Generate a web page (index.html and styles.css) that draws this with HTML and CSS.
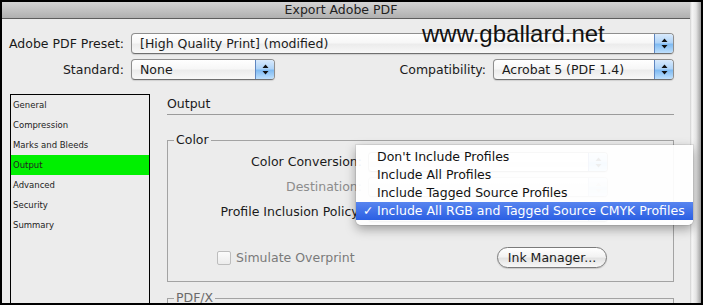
FILE: index.html
```html
<!DOCTYPE html>
<html lang="en">
<head>
<meta charset="utf-8">
<title>Export Adobe PDF</title>
<link rel="stylesheet" href="styles.css">
</head>
<body>
<div class="frame">
  <div class="window">
    <div class="dialog">
      <div class="titlebar">Export Adobe PDF</div>
      <div class="content">
        <div class="presets">
          <div class="label">Adobe PDF Preset:</div>
          <div class="popup">
            <span class="popup-text">[High Quality Print] (modified)</span>
            <span class="cap"><svg width="7" height="11" viewBox="0 0 7 11"><path d="M3.5 0.5 L6.5 4 L0.5 4 Z M0.5 7 L6.5 7 L3.5 10.5 Z" fill="#111"/></svg></span>
          </div>
          <div class="label">Standard:</div>
          <div class="row2">
            <div class="popup popup-std">
              <span class="popup-text">None</span>
              <span class="cap"><svg width="7" height="11" viewBox="0 0 7 11"><path d="M3.5 0.5 L6.5 4 L0.5 4 Z M0.5 7 L6.5 7 L3.5 10.5 Z" fill="#111"/></svg></span>
            </div>
            <div class="compat">
              <span class="label">Compatibility:</span>
              <div class="popup popup-compat">
                <span class="popup-text">Acrobat 5 (PDF 1.4)</span>
                <span class="cap"><svg width="7" height="11" viewBox="0 0 7 11"><path d="M3.5 0.5 L6.5 4 L0.5 4 Z M0.5 7 L6.5 7 L3.5 10.5 Z" fill="#111"/></svg></span>
              </div>
            </div>
          </div>
        </div>
        <div class="main">
          <ul class="sections">
            <li>General</li>
            <li>Compression</li>
            <li>Marks and Bleeds</li>
            <li class="active">Output</li>
            <li>Advanced</li>
            <li>Security</li>
            <li>Summary</li>
          </ul>
          <div class="panel">
            <div class="panel-title">Output</div>
            <fieldset class="group group-color">
              <legend>Color</legend>
              <div class="form">
                <div class="flabel">Color Conversion:</div>
                <div class="popup popup-small">
                  <span class="popup-text"></span>
                  <span class="cap"><svg width="7" height="11" viewBox="0 0 7 11"><path d="M3.5 0.5 L6.5 4 L0.5 4 Z M0.5 7 L6.5 7 L3.5 10.5 Z" fill="#111"/></svg></span>
                </div>
                <div class="flabel disabled">Destination:</div>
                <div class="popup popup-small popup-disabled">
                  <span class="popup-text"></span>
                  <span class="cap"><svg width="7" height="11" viewBox="0 0 7 11"><path d="M3.5 0.5 L6.5 4 L0.5 4 Z M0.5 7 L6.5 7 L3.5 10.5 Z" fill="#999"/></svg></span>
                </div>
                <div class="flabel">Profile Inclusion Policy:</div>
                <div class="popup popup-small">
                  <span class="popup-text"></span>
                  <span class="cap"><svg width="7" height="11" viewBox="0 0 7 11"><path d="M3.5 0.5 L6.5 4 L0.5 4 Z M0.5 7 L6.5 7 L3.5 10.5 Z" fill="#111"/></svg></span>
                </div>
              </div>
              <div class="options">
                <label class="check-label"><span class="checkbox"></span>Simulate Overprint</label>
                <button class="button" type="button">Ink Manager...</button>
              </div>
            </fieldset>
            <fieldset class="group group-pdfx">
              <legend>PDF/X</legend>
              <div class="pdfx-body"></div>
            </fieldset>
          </div>
        </div>
      </div>
    </div>
    <div class="edge"></div>
  </div>
  <div class="watermark">www.gballard.net</div>
  <ul class="menu">
    <li>Don't Include Profiles</li>
    <li>Include All Profiles</li>
    <li>Include Tagged Source Profiles</li>
    <li class="selected"><span class="check">✓</span>Include All RGB and Tagged Source CMYK Profiles</li>
  </ul>
</div>
</body>
</html>
```
FILE: styles.css
```css
html, body {
  margin: 0;
  padding: 0;
  background: #000;
}

.frame {
  position: relative;
  width: 703px;
  height: 305px;
  box-sizing: border-box;
  border: 2px solid #000;
  overflow: hidden;
  font-family: "DejaVu Sans", Verdana, sans-serif;
  font-size: 12.5px;
  color: #1a1a1a;
}

.window {
  display: flex;
  height: 100%;
}

.dialog {
  flex: 1;
  display: flex;
  flex-direction: column;
  background: #ececec;
  min-width: 0;
}

.edge {
  width: 11px;
  background: linear-gradient(to right, #cfcfcf 0, #f6f6f6 2px, #e4e4e4 55%, #9e9e9e 100%);
}

.titlebar {
  height: 16px;
  line-height: 16px;
  text-align: center;
  padding-right: 10px;
  background: linear-gradient(#d4d4d4, #b0b0b0);
  border-bottom: 1px solid #5e5e5e;
  color: #222;
}

.content {
  flex: 1;
  min-height: 0;
  display: flex;
  flex-direction: column;
  padding: 14px 16px 0 0;
}

.presets {
  display: grid;
  grid-template-columns: 122px 1fr;
  grid-auto-rows: 21px;
  column-gap: 7px;
  row-gap: 5px;
}

.label {
  text-align: right;
  line-height: 21px;
  white-space: nowrap;
}

.row2 {
  display: flex;
  justify-content: space-between;
}

.compat {
  display: flex;
  gap: 7px;
}

.popup {
  display: flex;
  height: 21px;
  box-sizing: border-box;
  border: 1px solid #8e8e8e;
  border-bottom-color: #6f6f6f;
  border-radius: 4px;
  background: linear-gradient(#ffffff, #f7f7f7 45%, #ececec 55%, #f8f8f8);
  box-shadow: 0 1px 1px rgba(0, 0, 0, 0.12);
  overflow: hidden;
}

.popup-text {
  flex: 1;
  padding-left: 8px;
  line-height: 19px;
  white-space: nowrap;
  overflow: hidden;
}

.cap {
  width: 18px;
  display: flex;
  align-items: center;
  justify-content: center;
  border-left: 1px solid #5f86c0;
  background: linear-gradient(#d9eafc, #b0d4f8 45%, #80bbf2 55%, #bfe0fd);
}

.popup-std {
  width: 144px;
}

.popup-compat {
  width: 181px;
}

.main {
  flex: 1;
  display: flex;
  gap: 17px;
  margin-top: 14px;
  padding-left: 8px;
  min-height: 0;
}

.sections {
  list-style: none;
  margin: 0;
  padding: 0;
  width: 140px;
  height: 230px;
  flex: none;
  box-sizing: border-box;
  border: 1px solid #000;
  font-size: 8.5px;
  color: #222;
}

.sections li {
  height: 20px;
  line-height: 20px;
  padding-left: 2px;
}

.sections li.active {
  background: #00f000;
}

.panel {
  flex: 1;
  display: flex;
  flex-direction: column;
  min-width: 0;
}

.panel-title {
  height: 20px;
  line-height: 20px;
  border-bottom: 1px solid #9b9b9b;
}

.group {
  margin: 0;
  padding: 5px 0 13px 0;
  border: 1px solid #a3a3a3;
  min-width: 0;
}

.group legend {
  margin-left: 6px;
  padding: 0 2px;
  line-height: 14px;
}

.group-color {
  margin-top: 18px;
}

.group-pdfx {
  margin-top: 9px;
}

.group-pdfx legend {
  color: #6a6a6a;
}

.pdfx-body {
  height: 40px;
}

.form {
  display: grid;
  grid-template-columns: 194px 240px;
  grid-auto-rows: 20px;
  column-gap: 6px;
  row-gap: 5px;
}

.flabel {
  text-align: right;
  line-height: 20px;
  white-space: nowrap;
}

.flabel.disabled {
  color: #8c8c8c;
}

.popup-small {
  height: 20px;
}

.popup-small .popup-text {
  line-height: 18px;
}

.popup-disabled {
  opacity: 0.5;
}

.options {
  display: flex;
  align-items: center;
  height: 21px;
  margin-top: 25px;
  padding-left: 49px;
  padding-right: 66px;
}

.check-label {
  flex: 1;
  display: flex;
  align-items: center;
  gap: 5px;
  color: #7a7a7a;
}

.checkbox {
  width: 14px;
  height: 14px;
  box-sizing: border-box;
  border: 1px solid #bdbdbd;
  border-radius: 2px;
  background: linear-gradient(#fbfbfb, #ececec);
}

.button {
  width: 110px;
  height: 21px;
  padding: 0;
  box-sizing: border-box;
  border: 1px solid #7b7b7b;
  border-radius: 11px;
  background: linear-gradient(#ffffff, #f3f3f3 45%, #e3e3e3 55%, #f8f8f8);
  box-shadow: 0 1px 1px rgba(0, 0, 0, 0.15);
  font-family: "DejaVu Sans", Verdana, sans-serif;
  font-size: 12.5px;
  color: #1a1a1a;
  line-height: 19px;
}

.watermark {
  position: absolute;
  left: 420px;
  top: 18px;
  font-family: "Liberation Sans", Arial, sans-serif;
  font-size: 24px;
  line-height: 28px;
  color: #111;
  white-space: nowrap;
}

.menu {
  position: absolute;
  left: 354px;
  top: 143px;
  width: 337px;
  margin: 0;
  padding: 3px 0 5px;
  list-style: none;
  background: rgba(255, 255, 255, 0.93);
  border-radius: 0 0 5px 5px;
  box-shadow: 0 4px 11px rgba(0, 0, 0, 0.35), 0 0 0 1px rgba(0, 0, 0, 0.07);
  color: #111;
}

.menu li {
  height: 18px;
  line-height: 18px;
  padding-left: 21px;
  white-space: nowrap;
}

.menu li.selected {
  padding-left: 7px;
  color: #fff;
  background: linear-gradient(#5885ef, #2b5fe3);
}

.check {
  display: inline-block;
  width: 14px;
}
```
